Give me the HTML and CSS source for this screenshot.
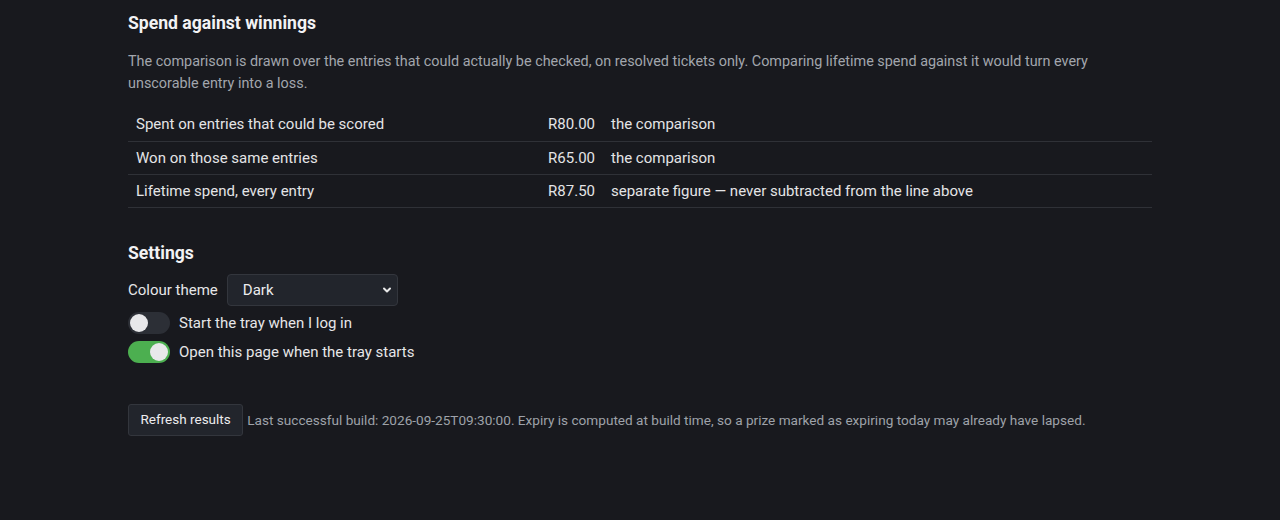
FILE: index.html
```html
<!DOCTYPE html>
<html lang="en">
<head>
<meta charset="utf-8">
<title>Settings</title>
<link rel="stylesheet" href="styles.css">
</head>
<body>
<main class="page">
  <section class="section">
    <h2 class="title">Spend against winnings</h2>
    <p class="lede">The comparison is drawn over the entries that could actually be checked, on resolved tickets only. Comparing lifetime spend against it would turn every unscorable entry into a loss.</p>
    <table class="figures">
      <colgroup>
        <col class="col-label">
        <col class="col-amount">
        <col class="col-note">
      </colgroup>
      <tbody>
        <tr><td>Spent on entries that could be scored</td><td class="amount">R80.00</td><td>the comparison</td></tr>
        <tr><td>Won on those same entries</td><td class="amount">R65.00</td><td>the comparison</td></tr>
        <tr><td>Lifetime spend, every entry</td><td class="amount">R87.50</td><td>separate figure — never subtracted from the line above</td></tr>
      </tbody>
    </table>
  </section>

  <section class="section settings">
    <h2 class="title">Settings</h2>
    <div class="field">
      <label class="field-label" for="theme">Colour theme</label>
      <div class="select-wrap">
        <select id="theme" class="select">
          <option>Dark</option>
          <option>Light</option>
          <option>System</option>
        </select>
        <svg class="chevron" viewBox="0 0 12 12" width="12" height="12" aria-hidden="true"><path d="M3 4.5 6 7.5l3-3" fill="none" stroke="#e8e8e8" stroke-width="2" stroke-linecap="round" stroke-linejoin="round"/></svg>
      </div>
    </div>
    <label class="toggle-row">
      <span class="toggle"><span class="knob"></span></span>
      <span>Start the tray when I log in</span>
    </label>
    <label class="toggle-row">
      <span class="toggle on"><span class="knob"></span></span>
      <span>Open this page when the tray starts</span>
    </label>
  </section>

  <footer class="footer">
    <button class="button" type="button">Refresh results</button>
    <span class="footnote">Last successful build: 2026-09-25T09:30:00. Expiry is computed at build time, so a prize marked as expiring today may already have lapsed.</span>
  </footer>
</main>
</body>
</html>
```

FILE: styles.css
```css
* { box-sizing: border-box; }
html, body {
  margin: 0;
  padding: 0;
  background: #18191e;
}
body {
  font-family: Roboto, "Liberation Sans", Arial, sans-serif;
  color: #e6e6e8;
  font-size: 15px;
}
.page {
  width: 1024px;
  margin: 0 auto;
  padding-top: 11px;
}
.title {
  margin: 0;
  font-size: 17.6px;
  line-height: 24px;
  font-weight: 700;
  color: #f2f2f4;
}
.lede {
  margin: 16px 0 13px;
  font-size: 14.4px;
  line-height: 22px;
  color: #a2a6ad;
}
.figures {
  width: 100%;
  border-collapse: collapse;
  table-layout: fixed;
}
.col-label { width: 412px; }
.col-amount { width: 63px; }
.figures td {
  padding: 0 8px;
  height: 33px;
  line-height: 20px;
  border-bottom: 1px solid #2f3137;
  color: #e4e4e6;
  font-size: 15px;
  white-space: nowrap;
}
.figures td.amount { text-align: right; }
.settings {
  margin-top: 33px;
}
.field {
  display: flex;
  align-items: center;
  gap: 9px;
  margin-top: 9px;
}
.field-label {
  font-size: 15px;
  color: #e6e6e8;
}
.select-wrap {
  position: relative;
  width: 171px;
  height: 32px;
}
.select {
  appearance: none;
  -webkit-appearance: none;
  width: 100%;
  height: 100%;
  background: #22252c;
  border: 1px solid #33363d;
  border-radius: 4px;
  color: #ececee;
  font-family: inherit;
  font-size: 15px;
  padding: 0 0 0 15px;
  outline: none;
}
.chevron {
  position: absolute;
  right: 5px;
  top: 10px;
  pointer-events: none;
}
.toggle-row {
  display: flex;
  align-items: center;
  gap: 9px;
  margin-top: 6px;
  font-size: 15px;
  line-height: 22px;
  color: #e6e6e8;
}
.toggle-row + .toggle-row { margin-top: 7px; }
.toggle {
  display: flex;
  align-items: center;
  width: 42px;
  height: 22px;
  border-radius: 11px;
  background: #2c2f36;
  padding: 0 2px;
}
.toggle .knob {
  width: 18px;
  height: 18px;
  border-radius: 50%;
  background: #e8e8ea;
}
.toggle.on {
  background: #4caf50;
  justify-content: flex-end;
}
.footer {
  display: flex;
  align-items: center;
  gap: 4px;
  margin-top: 41px;
}
.button {
  height: 32px;
  padding: 0 11.5px 2px;
  background: #22252c;
  border: 1px solid #33363d;
  border-radius: 3px;
  color: #ececee;
  font-family: inherit;
  font-size: 13.5px;
}
.footnote {
  font-size: 13.6px;
  color: #9ea2a9;
}
```
